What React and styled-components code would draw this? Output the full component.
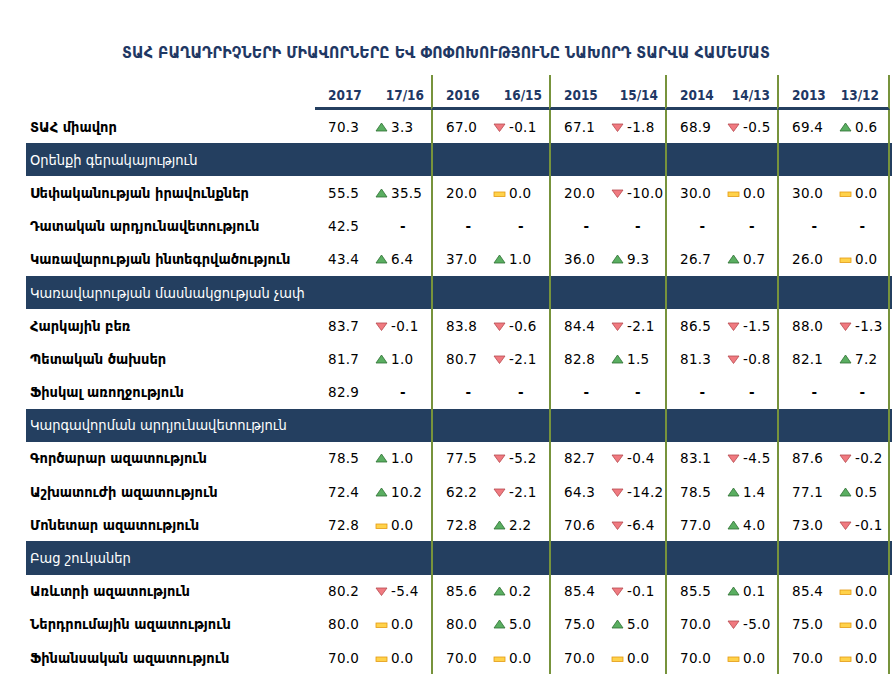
import React from 'react';
import styled, { createGlobalStyle } from 'styled-components';

const GlobalStyle = createGlobalStyle`
  * { box-sizing: border-box; }
  body {
    margin: 0;
    background: #ffffff;
    font-family: "DejaVu Sans", sans-serif;
  }
`;

const NAVY = '#243f60';
const OLIVE = '#77933c';
const COLS = '289px 118px 118px 116px 112px 111px';

const Page = styled.div`
  width: 892px;
  padding: 43px 0 0 26px;
`;

const Title = styled.h1`
  margin: 0 0 0 -26px;
  width: 892px;
  height: 32px;
  text-align: center;
  font-family: "DejaVu Sans Condensed", "DejaVu Sans", sans-serif;
  font-weight: 700;
  font-size: 15.8px;
  line-height: 20px;
  color: #1f3864;
  letter-spacing: 0.1px;
`;

const Row = styled.div`
  display: grid;
  grid-template-columns: ${COLS};
  height: ${(p) => p.$h || '33.2px'};
  background: ${(p) => (p.$band ? NAVY : 'transparent')};
`;

const Label = styled.div`
  display: flex;
  align-items: center;
  padding-left: 4px;
  font-family: "DejaVu Sans Condensed", "DejaVu Sans", sans-serif;
  font-size: 14.5px;
  font-weight: ${(p) => (p.$band ? 400 : 600)};
  color: ${(p) => (p.$band ? '#ffffff' : '#000000')};
  white-space: nowrap;
`;

const Group = styled.div`
  display: grid;
  grid-template-columns: 45px 1fr;
  padding-left: 13px;
  border-left: ${(p) => (p.$first ? 'none' : `2px solid ${OLIVE}`)};
  border-right: ${(p) => (p.$last ? `2px solid ${OLIVE}` : 'none')};
  border-bottom: ${(p) => (p.$head ? `3px solid ${NAVY}` : 'none')};
  margin-left: ${(p) => (p.$first ? '0' : '-2px')};
`;

const HeadText = styled.div`
  display: flex;
  align-items: flex-end;
  justify-content: ${(p) => (p.$right ? 'flex-end' : 'flex-start')};
  padding: 0 ${(p) => (p.$right ? '9px' : '0')} 4px 0;
  font-family: "DejaVu Sans Condensed", "DejaVu Sans", sans-serif;
  font-size: 13.5px;
  font-weight: 600;
  color: #1f3864;
`;

const Value = styled.div`
  display: flex;
  align-items: center;
  justify-content: ${(p) => (p.$dash ? 'center' : 'flex-start')};
  font-size: 13.5px;
  color: #000;
  letter-spacing: 0.3px;
`;

const Change = styled.div`
  display: flex;
  align-items: center;
  justify-content: ${(p) => (p.$dash ? 'center' : 'flex-start')};
  padding-left: ${(p) => (p.$dash ? '0' : '2px')};
  gap: 3px;
  font-size: 13.5px;
  color: #000;
  letter-spacing: 0.3px;
`;

const Dash = styled.span`
  font-weight: 700;
`;

const Icon = ({ dir }) => {
  if (dir === 'up')
    return (
      <svg width="13" height="10" viewBox="0 0 13 10">
        <polygon points="6.5,1 12,9 1,9" fill="#5aae61" stroke="#2f7034" strokeWidth="0.8" />
      </svg>
    );
  if (dir === 'down')
    return (
      <svg width="13" height="10" viewBox="0 0 13 10">
        <polygon points="1,2 12,2 6.5,9.5" fill="#f07a80" stroke="#b64a4f" strokeWidth="0.8" />
      </svg>
    );
  return (
    <svg width="13" height="10" viewBox="0 0 13 10">
      <rect x="1" y="4" width="11" height="4.5" fill="#ffd24a" stroke="#e39a12" strokeWidth="0.8" />
    </svg>
  );
};

const groups = [
  ['2017', '17/16'],
  ['2016', '16/15'],
  ['2015', '15/14'],
  ['2014', '14/13'],
  ['2013', '13/12'],
];

const D = [null];
const rows = [
  { label: 'ՏԱՀ միավոր', cells: [['70.3', 'up', '3.3'], ['67.0', 'down', '-0.1'], ['67.1', 'down', '-1.8'], ['68.9', 'down', '-0.5'], ['69.4', 'up', '0.6']] },
  { band: true, label: 'Օրենքի գերակայություն' },
  { label: 'Սեփականության իրավունքներ', cells: [['55.5', 'up', '35.5'], ['20.0', 'flat', '0.0'], ['20.0', 'down', '-10.0'], ['30.0', 'flat', '0.0'], ['30.0', 'flat', '0.0']] },
  { label: 'Դատական արդյունավետություն', cells: [['42.5'], D, D, D, D] },
  { label: 'Կառավարության ինտեգրվածություն', cells: [['43.4', 'up', '6.4'], ['37.0', 'up', '1.0'], ['36.0', 'up', '9.3'], ['26.7', 'up', '0.7'], ['26.0', 'flat', '0.0']] },
  { band: true, label: 'Կառավարության մասնակցության չափ' },
  { label: 'Հարկային բեռ', cells: [['83.7', 'down', '-0.1'], ['83.8', 'down', '-0.6'], ['84.4', 'down', '-2.1'], ['86.5', 'down', '-1.5'], ['88.0', 'down', '-1.3']] },
  { label: 'Պետական ծախսեր', cells: [['81.7', 'up', '1.0'], ['80.7', 'down', '-2.1'], ['82.8', 'up', '1.5'], ['81.3', 'down', '-0.8'], ['82.1', 'up', '7.2']] },
  { label: 'Ֆիսկալ առողջություն', cells: [['82.9'], D, D, D, D] },
  { band: true, label: 'Կարգավորման արդյունավետություն' },
  { label: 'Գործարար ազատություն', cells: [['78.5', 'up', '1.0'], ['77.5', 'down', '-5.2'], ['82.7', 'down', '-0.4'], ['83.1', 'down', '-4.5'], ['87.6', 'down', '-0.2']] },
  { label: 'Աշխատուժի ազատություն', cells: [['72.4', 'up', '10.2'], ['62.2', 'down', '-2.1'], ['64.3', 'down', '-14.2'], ['78.5', 'up', '1.4'], ['77.1', 'up', '0.5']] },
  { label: 'Մոնետար ազատություն', cells: [['72.8', 'flat', '0.0'], ['72.8', 'up', '2.2'], ['70.6', 'down', '-6.4'], ['77.0', 'up', '4.0'], ['73.0', 'down', '-0.1']] },
  { band: true, label: 'Բաց շուկաներ' },
  { label: 'Առևտրի ազատություն', cells: [['80.2', 'down', '-5.4'], ['85.6', 'up', '0.2'], ['85.4', 'down', '-0.1'], ['85.5', 'up', '0.1'], ['85.4', 'flat', '0.0']] },
  { label: 'Ներդրումային ազատություն', cells: [['80.0', 'flat', '0.0'], ['80.0', 'up', '5.0'], ['75.0', 'up', '5.0'], ['70.0', 'down', '-5.0'], ['75.0', 'flat', '0.0']] },
  { label: 'Ֆինանսական ազատություն', cells: [['70.0', 'flat', '0.0'], ['70.0', 'flat', '0.0'], ['70.0', 'flat', '0.0'], ['70.0', 'flat', '0.0'], ['70.0', 'flat', '0.0']] },
];

const Cell = ({ data }) => {
  const [value, dir, change] = data;
  return (
    <>
      <Value $dash={!value}>{value || <Dash>-</Dash>}</Value>
      {dir ? (
        <Change>
          <Icon dir={dir} />
          <span>{change}</span>
        </Change>
      ) : (
        <Change $dash>
          <Dash>-</Dash>
        </Change>
      )}
    </>
  );
};

export default function App() {
  return (
    <Page>
      <GlobalStyle />
      <Title>ՏԱՀ ԲԱՂԱԴՐԻՉՆԵՐԻ ՄԻԱՎՈՐՆԵՐԸ ԵՎ ՓՈՓՈԽՈՒԹՅՈՒՆԸ ՆԱԽՈՐԴ ՏԱՐՎԱ ՀԱՄԵՄԱՏ</Title>
      <Row $h="35px">
        <Label />
        {groups.map(([y, c], i) => (
          <Group key={y} $head $first={i === 0} $last={i === groups.length - 1}>
            <HeadText>{y}</HeadText>
            <HeadText $right>{c}</HeadText>
          </Group>
        ))}
      </Row>
      {rows.map((r) => (
        <Row key={r.label} $band={r.band}>
          <Label $band={r.band}>{r.label}</Label>
          {groups.map(([y], i) => (
            <Group key={y} $first={i === 0} $last={i === groups.length - 1}>
              {r.cells && <Cell data={r.cells[i]} />}
            </Group>
          ))}
        </Row>
      ))}
    </Page>
  );
}
